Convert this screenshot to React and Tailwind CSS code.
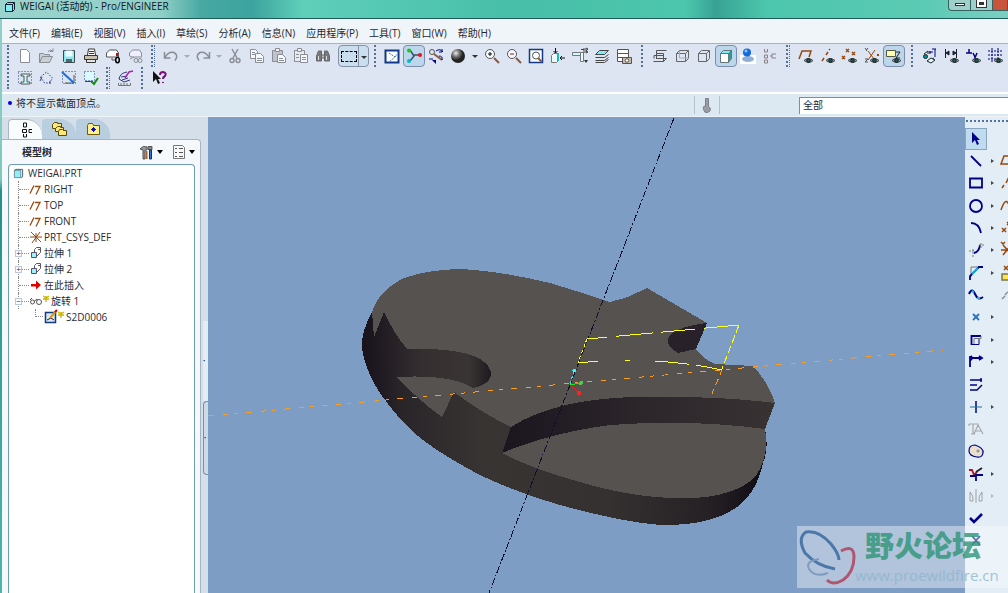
import React, { useState } from 'react';
import clsx from 'clsx';

const menus = ['文件(F)', '编辑(E)', '视图(V)', '插入(I)', '草绘(S)', '分析(A)', '信息(N)', '应用程序(P)', '工具(T)', '窗口(W)', '帮助(H)'];

const NAVY = '#00008b';
const BROWN = '#96480e';
const GRAY = '#8b8d95';

const Eye = () => (
  <g>
    <path d="M7 13.5q4-4 9 0q-4 4-9 0z" fill="#9aa4a8" stroke="#4a4a4a" />
    <circle cx="11.5" cy="13.5" r="1.8" fill="#0c6868" stroke="#111" />
  </g>
);

const icons = {
  new: <path d="M4.5 2.500h6l3 3v10h-9z" fill="#fbfdff" stroke={GRAY} />,
  open: <g stroke={GRAY}><path d="M1.500 15.500v-9h4l1 1h5v2M1.500 15.500l3-6h10l-3 6z" fill="#c9cdd4" /><path d="M10 4.500q3-3 5 0m0-3v3h-3" /></g>,
  save: <g><path d="M3.500 3.500h11v12h-10l-1-1z" fill="#8fe6ee" stroke="#3d4850" /><path d="M5.500 3.500h7v6h-7z" fill="#e9fdff" stroke="none" /><path d="M6 12h6v3H6z" fill="#566" stroke="none" /></g>,
  print: <g stroke="#3a3530"><path d="M5.500 8l1-6h6l1 6" fill="#fff" /><path d="M2.500 8.500h13v4h-13z" fill="#c9bfae" /><path d="M4.500 12.500h9v3h-9zM7 4.500h5M7 6.500h5" /></g>,
  mail: <g stroke="#555"><path d="M2.500 10V6l3-3h7l2 3v4z" fill="#fff" /><path d="M8 11v2l4 0" stroke="#555" /><path d="M13 6v3" stroke="#d00" strokeWidth="2" /><ellipse cx="13.500" cy="13" rx="1.800" ry="2.800" stroke="#000" strokeWidth="1.500" /></g>,
  link: <g stroke={GRAY}><path d="M3.500 9V6l3-3h7l2 3v4h-9z" fill="#eef" /><circle cx="10" cy="13.500" r="2" /><circle cx="14" cy="13.500" r="2" /><path d="M4 12l4-2" /></g>,
  undo: <path d="M2.500 5v6h6M3 10.500q3-6 9-5q5 3 1 8" stroke={GRAY} strokeWidth="1.500" />,
  redo: <path d="M15.500 5v6h-6M15 10.500q-3-6-9-5q-5 3-1 8" stroke={GRAY} strokeWidth="1.500" />,
  cut: <g stroke={GRAY} strokeWidth="1.400"><path d="M6 2l5 9M12 2L7 11" /><circle cx="6" cy="13.500" r="2" /><circle cx="12" cy="13.500" r="2" /></g>,
  copy: <g stroke={GRAY} fill="#f4f7fb"><path d="M2.500 2.500h5l2 2v7h-7z" /><path d="M7.500 6.500h5l3 3v6h-8z" /><path d="M4 5.500h3M4 7.500h3M9 11.500h5M9 13.500h5" /></g>,
  paste: <g stroke={GRAY}><path d="M2.500 3.500h10v11h-10z" fill="#bfc4cc" /><path d="M5.500 1.500h4v3h-4z" fill="#eee" /><path d="M7.500 7.500h5l3 3v5h-8z" fill="#f4f7fb" /><path d="M9 11.500h4M9 13.500h5" /></g>,
  pasteSpecial: <g stroke={GRAY}><path d="M2.500 3.500h10v11h-10z" fill="#e8ecf2" /><path d="M5.500 1.500h4v3h-4z" fill="#eee" /><path d="M4 7.500h3M4 10.500h3" /><path d="M8.500 7.500h7v8h-7z" fill="#f4f7fb" /><path d="M10 10.500h4M10 12.500h4" /></g>,
  find: <g stroke="#666" fill="#777a80"><path d="M2.500 14v-5l2-5h3v10zM15.500 14v-5l-2-5h-3v10z" /><path d="M7.500 8h3v3h-3z" fill="#bbb" /><path d="M4.500 9v4M12.500 9v4" stroke="#ddd" /></g>,
  sketchView: <g><path d="M2.500 3.500h13v12h-13z" fill="#fff" stroke="#12388a" strokeWidth="2" /><path d="M6 6l6 4-6 5M12 10l2-3" stroke="#3577b5" strokeDasharray="2 1" /></g>,
  skeleton: <g strokeWidth="1.500"><path d="M5 3l4 6-4 5M9 8h7" stroke="#33556b" /><circle cx="4" cy="3.500" r="2" fill="#1c1" stroke="none" /><circle cx="4" cy="14" r="2" fill="#0bc" stroke="none" /><circle cx="15" cy="8" r="2" fill="#e11" stroke="none" /></g>,
  spin: <g><circle cx="5" cy="5" r="2.500" stroke="#555" /><path d="M7 7l8 6" stroke="#8b5a3c" strokeWidth="2" /><path d="M9 4q4-3 7 1M15 2v3h-3M2 12h4M12 9q4 0 3 4" stroke={NAVY} /><path d="M5 13h4v4z" fill={NAVY} /></g>,
  sphere: <circle cx="9" cy="9" r="7" fill="url(#ball)" />,
  zoomIn: <g><circle cx="7" cy="7" r="4.500" fill="#f4fbff" stroke="#555" /><path d="M5 7h4M7 5v4" stroke="#111" /><path d="M11 11l5 5" stroke="#8b5a3c" strokeWidth="2" /></g>,
  zoomOut: <g><circle cx="7" cy="7" r="4.500" fill="#f4fbff" stroke="#555" /><path d="M5 7h4" stroke="#a11" /><path d="M11 11l5 5" stroke="#8b5a3c" strokeWidth="2" /></g>,
  refit: <g><path d="M2.500 2.500h13v13h-13z" fill="#fff" stroke="#12388a" strokeWidth="1.500" /><circle cx="9" cy="8.500" r="3.500" stroke="#555" /><path d="M11 11l4 4" stroke="#8b5a3c" strokeWidth="2" /></g>,
  orient: <g><path d="M2.500 8.500l2-2h5v7l-2 2h-5z" fill="#e9fbff" stroke="#777" /><path d="M9 7v7" stroke="#16b9b4" strokeWidth="2" /><path d="M6.500 1v5M4.500 4l2 2 2-2M16 11h-5M13 9l-2 2 2 2" stroke="#111" /></g>,
  saved: <g><path d="M1.500 5.500h8v3h-8z" fill="#c9fbff" stroke="#777" /><path d="M9.500 5.500v9h3v-9z" fill="#e4fdff" stroke="#777" /><path d="M10 2.500h3M13 1v5M15 1l2 1-2 2 2 1-2 1z" stroke="#444" /><path d="M13 13h4l-2 3z" fill="#333" stroke="none" /></g>,
  layers: <g stroke="#444"><path d="M2.500 13.500h9l4-3M2.500 15.500h9l4-3M2.500 10.500h9l4-3" /><path d="M2.500 7.500l4-4h9l-4 4z" fill="#7eeef5" /></g>,
  camera: <g stroke="#555"><path d="M2.500 2.500h11v12h-11z" fill="#fff" /><path d="M2.500 6.500h11M2.500 10.500h6" /><path d="M7.500 10.500h9v6h-9z" fill="#c9bfae" /><circle cx="12" cy="13.500" r="1.800" fill="#fff" /></g>,
  wireframe: <path d="M5.500 12V3.500h10M5.500 6.500h7v8M3 8.500h9M2.500 14.500h10l3-3M3 8.500v3M15.500 11.500h-10" stroke="#555" />,
  hidden: <g stroke="#666"><path d="M3.500 6.500h9v8h-9zM3.500 6.500l3-3h9v8l-3 3M12.500 6.500l3-3" /><path d="M6.500 4v7h9" stroke="#a9adb5" /></g>,
  noHidden: <path d="M3.500 6.500h8v8h-8zM3.500 6.500l3-3h8v8l-3 3M11.500 6.500l3-3" stroke="#666" />,
  shaded: <g stroke="#677"><path d="M3.500 6.500h8v9h-8z" fill="#fff" /><path d="M3.500 6.500l3-3h8l-3 3z" fill="#7eeef5" /><path d="M11.500 6.500l3-3v8l-3 4z" fill="#2f9b9b" /></g>,
  realism: <g stroke="none"><path d="M1 8h16v9H1z" fill="#fff" /><ellipse cx="9" cy="12" rx="6" ry="3" fill="#8fb0d4" /><circle cx="8" cy="5.500" r="4" fill="#1469e0" /><circle cx="7" cy="4" r="1.500" fill="#8fc6ff" /></g>,
  treeView: <path d="M3.500 2v3h3V2M3.500 8h3v3h-3zM3.500 13h3v3h-3zM9 9h2M15 7h-4v4h4" stroke="#8b8088" />,
  planes: <g><path d="M2 12l3-8h9l-2 6" stroke={BROWN} strokeWidth="1.500" /><Eye /></g>,
  axes: <g><path d="M3 14l2-3M7 8l2-3M10 3l1-1" stroke={BROWN} strokeWidth="1.500" /><Eye /></g>,
  points: <g><path d="M5 2l3 3M8 2l-3 3M11 5l3 3M14 5l-3 3M1 9l3 3M4 9l-3 3" stroke={BROWN} strokeWidth="1.500" /><Eye /></g>,
  csys: <g><path d="M5 4l6 8M12 3L5 13M14 7l2 2M16 7l-2 2" stroke={BROWN} /><path d="M2 1l1.500 2L5 1M3.500 3v1M2 12h3l-3 3h3" stroke="#555" /><Eye /></g>,
  tags: <g><path d="M1.500 3.500h9v6h-9z" fill="#fffdb0" stroke="#554" /><path d="M11 5h4l-4 6h4" stroke="#222" /><Eye /></g>,
  annot: <g><path d="M8 5h4M9 4v3M14 2v8M11 2h4" stroke={NAVY} /><path d="M3 7l4-3v3M7 14l6-3" stroke="#222" /><circle cx="4.500" cy="9.500" r="2" fill="#0a8c94" stroke="#222" /><path d="M6 14l4-3 4 2-4 3z" fill="#dff" stroke="#222" /></g>,
  dims: <g><path d="M2.500 2v9M13.500 2v9M3 6l3-2v4zM13 6l-3-2v4z" stroke="#1b1b30" fill="#1b1b30" /><Eye /></g>,
  constraints: <g><path d="M1 6h6M4 2v4M8 6l2 4M12 6l-3 7" stroke={NAVY} strokeWidth="1.500" /><Eye /></g>,
  gridToggle: <g><path d="M1 4h15M1 8h15M1 12h8M5 1v15M11 1v10" stroke={NAVY} strokeDasharray="2 1" /><Eye /></g>,
  section: <g><path d="M2.500 2.500h13v12h-13z" stroke="#2c3f8f" strokeDasharray="1 2" /><path d="M5 5h9v2h-3v6h3v2H5v-2h3V7H5z" fill="#c9fbff" stroke="#555" /></g>,
  polySel: <g stroke="#2c3f8f"><path d="M2.500 8l6-5 6 6-3 5h-5z" strokeDasharray="1.500 1.500" /><path d="M4 8l-2 4M12 12v3" /></g>,
  diagSel: <g><path d="M2.500 2.500h13v12h-13z" stroke="#2c3f8f" strokeDasharray="1 2" /><path d="M5 14h9V6" stroke="#555" /><path d="M2 3l12 11" stroke="#1b6fd8" strokeWidth="2" /></g>,
  checkSel: <g><path d="M2.500 2.500h10v9h-10z" fill="#d9fbff" stroke="#2c3f8f" strokeDasharray="1 2" /><path d="M3 12.500h8" stroke="#444" /><path d="M9 12l3 3 4-6" stroke="#178a17" strokeWidth="2" /></g>,
  sketch: <g><path d="M3 10q1-6 8-7M3 10l5 3 6-2M5 8l6-1M6 11l6-2" stroke="#333a80" /><path d="M9 9l4-6 4-1" stroke="#b01fb0" strokeWidth="1.500" /><path d="M2.500 14v2.500h12V14M5 14v2M8 14v2M11 14v2" stroke="#777" /></g>,
  help: <g><path d="M3 2v11l3-3 2 5 2-1-2-4h3z" fill="#111" stroke="none" /><path d="M10 6q0-3 3-3q4 1 2 4q-2 1-2 3M13 13v1" stroke="#7d0f7d" strokeWidth="2" /></g>,
};

const Icon = ({ name }) => (
  <svg viewBox="0 0 18 18" className="size-[18px] shrink-0" fill="none">{icons[name]}</svg>
);

const Tool = ({ name, on }) => (
  <button aria-label={name} className={clsx('h-[22px] w-[22px] shrink-0 flex items-center justify-center rounded-sm', on && 'border border-[#7d8ea8] bg-[#bcd6ec]')}>
    <Icon name={name} />
  </button>
);

const Drop = ({ dim, className }) => (
  <button aria-label="more" className={clsx('shrink-0 h-[22px] flex items-center justify-center', className)}>
    <span className={clsx('border-x-3 border-t-3 border-x-transparent', dim ? 'border-t-[#a5adba]' : 'border-t-[#333]')} />
  </button>
);

const Grip = ({ double, className }) => (
  <div className={clsx('flex shrink-0 items-stretch justify-center gap-px', className)}>
    <span className="border-l-2 border-dotted border-[#54719c]" />
    {double && <span className="border-l border-dotted border-[#54719c]" />}
  </div>
);

const Tools = ({ names, active = [] }) => names.map(n => <Tool key={n} name={n} on={active.includes(n)} />);

function Toolbar() {
  return (
    <div className="flex shrink-0 border-t border-[#a9b3bf] border-b-2 border-b-white bg-[#dce5f1] pt-px pb-[3px]">
      <Grip className="w-3" />
      <div className="flex min-w-0 flex-col overflow-hidden">
        <div className="flex">
          <Tools names={['new', 'open', 'save', 'print', 'mail', 'link']} />
          <Grip double className="w-[14px]" />
          <Tool name="undo" /><Drop dim className="w-[10px]" />
          <Tool name="redo" /><Drop dim className="w-[10px]" />
          <Tools names={['cut', 'copy', 'paste', 'pasteSpecial', 'find']} />
          <div className="ml-1 flex h-[22px] shrink-0 rounded-sm border border-[#8592a6] bg-[#c9dff0]">
            <button aria-label="select" className="flex w-5 items-center justify-center border-r border-[#8592a6]">
              <span className="h-[11px] w-4 border border-dashed border-black" />
            </button>
            <Drop className="w-[9px]" />
          </div>
          <Grip className="w-3" />
          <Tools names={['sketchView', 'skeleton', 'spin', 'sphere']} active={['skeleton']} />
          <Drop className="w-3" />
          <Tools names={['zoomIn', 'zoomOut', 'refit', 'orient', 'saved', 'layers', 'camera']} />
          <Grip className="w-[14px]" />
          <Tools names={['wireframe', 'hidden', 'noHidden', 'shaded', 'realism', 'treeView']} active={['shaded']} />
          <Grip double className="w-[14px]" />
          <Tools names={['planes', 'axes', 'points', 'csys', 'tags']} active={['tags']} />
          <Grip className="w-[14px]" />
          <Tools names={['annot', 'dims', 'constraints', 'gridToggle']} />
        </div>
        <div className="flex">
          <Tools names={['section', 'polySel', 'diagSel', 'checkSel']} />
          <Grip double className="w-3" />
          <Tool name="sketch" />
          <Grip className="w-3" />
          <Tool name="help" />
        </div>
      </div>
    </div>
  );
}

const treeIcons = {
  plane: <path d="M1 12.500l4-8M6 5.500h5l-4 8M4 5.500h1" stroke={BROWN} strokeWidth="1.300" />,
  csys: <path d="M2 3l10 10M11 3L3 14M1 8h12M7 4v9" stroke={BROWN} />,
  extrude: <g stroke="#556"><path d="M2.500 7.500h5v5h-5z" fill="#9fefff" /><path d="M5.500 7V4.500l2-2h4v5l-4 4" /><path d="M9 4.500h2" /></g>,
  insert: <path d="M2 7h5V3.500l5 4.500-5 4.500V9.500H2z" fill="#e00000" stroke="none" />,
  revolve: <g stroke="#555"><circle cx="3.500" cy="9" r="2" /><circle cx="10" cy="9" r="2.500" /><path d="M5 9q2-4 4-2M1 7l2-2" /></g>,
  sketch: <g><path d="M1.500 3.500h10v10h-10z" fill="#dce8f8" stroke="#123a7a" strokeWidth="1.500" /><path d="M3 11l4-2 3 2" stroke="#222" /><path d="M6 9l6-7" stroke="#d99a1c" strokeWidth="2" /><path d="M11 3l2-2" stroke="#c00" strokeWidth="2" /></g>,
};

const nodes = [
  { icon: 'plane', label: 'RIGHT' },
  { icon: 'plane', label: 'TOP' },
  { icon: 'plane', label: 'FRONT' },
  { icon: 'csys', label: 'PRT_CSYS_DEF' },
  { icon: 'extrude', label: '拉伸 1', mark: '+' },
  { icon: 'extrude', label: '拉伸 2', mark: '+' },
  { icon: 'insert', label: '在此插入' },
  { icon: 'revolve', label: '旋转 1', mark: '−', star: true },
];

const Star = () => <svg viewBox="0 0 7 7" className="size-[7px] self-start mt-0.5" fill="none"><path d="M0 1l3 2 3-2M0 4h6M3 1v6" stroke="#c9b400" strokeWidth="1.300" /></svg>;

const TreeRow = ({ icon, label, mark, star }) => (
  <li className="flex h-4 items-center">
    <span className="relative ml-[9px] flex h-full w-[11px] items-center border-l border-dotted border-[#888]">
      <span className="w-full border-t border-dotted border-[#888]" />
      {mark && <span className="absolute -left-1 flex h-[7px] w-[7px] items-center justify-center border border-[#b8c8d8] bg-white text-[8px] leading-none">{mark}</span>}
    </span>
    <svg viewBox="0 0 14 16" className="h-4 w-[14px] shrink-0" fill="none">{treeIcons[icon]}</svg>
    {star && <Star />}
    <span className="ml-px whitespace-nowrap">{label}</span>
  </li>
);

function ModelTree() {
  const [tab, setTab] = useState(0);
  const tabIcons = [
    <path key="a" d="M5.500 1v4h3V1zM4.500 7.500h4v3h-4zM14 7.500h-3v3h3M5.500 12v3h3v-3" stroke="#111" />,
    <g key="b" stroke="#5b4a10" fill="#ffe87a"><path d="M1.500 3.500l2-2h3v1h4v5h-9z" /><path d="M4.500 7.500l2-2h3v1h3v4h-8z" /><path d="M7.500 10.500l1-2h3l1 1h3v5h-8z" /></g>,
    <g key="c"><path d="M2.500 4.500l1-2h4l1 2h6v9h-12z" fill="#fff08a" stroke="#6b5a10" /><path d="M8.500 6v5M6 8.500h5M7 7l3 3M10 7l-3 3" stroke="#11119a" /></g>,
  ];
  return (
    <aside className="flex w-[206px] shrink-0 flex-col bg-[#d5dfea] pt-[2px]">
      <div role="tablist" className="flex h-5 items-end pl-1.5">
        {tabIcons.map((g, i) => (
          <button key={i} role="tab" aria-selected={tab === i} aria-label={`tab ${i + 1}`} onClick={() => setTab(i)}
            className={clsx('flex h-5 w-[34px] items-center justify-center rounded-tl-sm rounded-tr-2xl', tab === i ? 'border-t border-l border-[#a9b5c0] bg-[#f9fcfd]' : 'bg-[#b9cede]')}>
            <svg viewBox="0 0 16 16" className="size-4" fill="none">{g}</svg>
          </button>
        ))}
      </div>
      <div className="flex min-h-0 flex-1">
        <div className="flex min-w-0 flex-1 flex-col rounded-tr border-t border-r border-[#a9b3c4] bg-[#f5f9fb] pl-1.5 pr-[5px]">
          <div className="flex h-6 items-center">
            <h2 className="flex-1 pl-[14px] text-[10px] font-bold">模型树</h2>
            <button aria-label="settings" className="flex items-center gap-0.5 pr-2">
              <svg viewBox="0 0 16 16" className="size-4" fill="none"><path d="M1 5q3-4 7-2v3H6v9H4V6z" fill="#999" stroke="#555" /><path d="M9 2.500h4v3h-4z" fill="#888" stroke="#555" /><path d="M10.500 6h2v9h-2z" fill="#2979d0" stroke="#135" /><path d="M7.500 7v8" stroke="#b06030" strokeWidth="2" /></svg>
              <span className="border-x-[3px] border-t-4 border-x-transparent border-t-black" />
            </button>
            <button aria-label="show" className="flex items-center gap-0.5">
              <svg viewBox="0 0 16 16" className="size-4" fill="none"><path d="M2.500 1.500h9l2 2v11h-11z" fill="#f6f8fa" stroke="#777" /><path d="M4 4.500h2M4 8.500h2M4 12.500h2M8 4.500h4M8 8.500h4M8 12.500h4" stroke="#555" /></svg>
              <span className="border-x-[3px] border-t-4 border-x-transparent border-t-black" />
            </button>
          </div>
          <ul className="flex-1 overflow-hidden rounded-t-sm border border-b-0 border-[#6c9bb3] bg-white text-[10px] text-[#2b2b33]">
            <li className="flex h-4 items-center pl-1">
              <svg viewBox="0 0 12 12" className="mr-1 size-[11px]" fill="none"><path d="M1.500 2.500h7v8h-7z" fill="#8ff0f2" stroke="#689" /><path d="M1.500 2.500l2-1h7v8l-2 1" stroke="#456" /></svg>
              WEIGAI.PRT
            </li>
            {nodes.map((n, i) => <TreeRow key={i} {...n} />)}
            <li className="flex h-4 items-center">
              <span className="mb-2 ml-[26px] h-2 w-2 border-b border-l border-dotted border-[#888]" />
              <svg viewBox="0 0 14 16" className="ml-px h-4 w-[14px]" fill="none">{treeIcons.sketch}</svg>
              <Star />
              <span className="ml-px">S2D0006</span>
            </li>
          </ul>
        </div>
        <div className="flex w-[7px] flex-col pl-0.5 text-[6px] leading-none text-[#222]">
          <div className="flex-4" />
          <button aria-label="collapse" className="flex h-[80px] items-center bg-[#e3edf4]">•</button>
          <button aria-label="expand" className="flex h-[74px] items-center rounded-l-sm border border-r-0 border-[#7d8ea0] bg-[#cddbe9]">•</button>
          <div className="flex-[2.6]" />
        </div>
      </div>
    </aside>
  );
}

function Viewport() {
  return (
    <main className="min-w-0 flex-1 overflow-hidden bg-[#7d9dc5]">
      <svg viewBox="208 117 757 476" preserveAspectRatio="xMinYMin slice" shapeRendering="crispEdges" className="block h-full w-full" fill="none">
        <defs>
          <linearGradient id="side" x1="362" x2="768" y1="0" y2="0" gradientUnits="userSpaceOnUse">
            <stop offset="0" stopColor="#17121b" />
            <stop offset=".1" stopColor="#2a2529" />
            <stop offset=".3" stopColor="#383432" />
            <stop offset=".6" stopColor="#353131" />
            <stop offset=".85" stopColor="#262124" />
            <stop offset="1" stopColor="#0f0b14" />
          </linearGradient>
          <linearGradient id="wall" x1="502" x2="775" y1="0" y2="0" gradientUnits="userSpaceOnUse">
            <stop offset="0" stopColor="#1b151e" />
            <stop offset=".5" stopColor="#2c262b" />
            <stop offset="1" stopColor="#383233" />
          </linearGradient>
          <linearGradient id="slot" x1="375" x2="492" y1="0" y2="0" gradientUnits="userSpaceOnUse">
            <stop offset="0" stopColor="#1e1920" />
            <stop offset=".4" stopColor="#342e30" />
            <stop offset=".8" stopColor="#3a3534" />
            <stop offset="1" stopColor="#1d181e" />
          </linearGradient>
        </defs>
        {/* solid body */}
        <path d="M362 348Q361 332 372 312Q378 292 402 279Q425 270 460 269Q500 271 550 283Q583 293 610 302L628 297L647 288L707 323L696 349Q706 361 715 364L753 366Q768 382 775 403L765 429Q769 448 763 463Q757 492 737 507Q712 525 665 525Q630 524 560 505Q520 494 480 475Q440 454 418 436Q400 420 388 404Q366 376 362 348z" fill="url(#side)" />
        <path d="M384 312Q393 332 407 349Q486 347 491 373Q490 384 473 388Q450 374 397 377L380 350z" fill="url(#slot)" />
        <path d="M372 312Q378 292 402 279Q425 270 460 269Q500 271 550 283Q583 293 610 302L628 297L647 288L707 323L696 349Q706 361 715 364L753 366Q768 382 775 403Q720 396 650 397Q600 400 559 409Q530 417 511 427Q480 412 454 392L442 417Q418 400 397 377Q450 374 473 388Q492 384 491 373Q486 347 407 349Q393 332 384 312L374 337z" fill="#555250" />
        <path d="M511 427Q560 396 650 397Q720 396 775 403L765 429Q630 411 502 453z" fill="url(#wall)" />
        <path d="M502 453Q550 433 610 425Q690 419 765 429Q770 456 755 477Q735 496 693 498Q640 500 580 482Q530 468 502 453z" fill="#555250" />
        <path d="M707 323Q680 326 670 335Q663 344 678 353L696 349z" fill="#28212a" />

        <path d="M674 118L489 593" stroke="#0d0d30" strokeDasharray="7 2 2 2" />
        <path d="M208 416L943 350" stroke="#ff9c1a" strokeDasharray="6 9 5 6 4 8" />
        <g stroke="#ffff20">
          <path d="M587 339L739 325" strokeDasharray="20 9 37 8 34 9 60" />
          <path d="M739 325L722 369" strokeDasharray="8 3" />
          <path d="M587 339L578 362" strokeDasharray="3 3" />
          <path d="M578 362.500L598 361.500M625 360.500H630M655 361Q690 363 722 370" strokeDasharray="34 7 40" />
        </g>
        <path d="M722 370L711 396" stroke="#ff9c1a" strokeDasharray="6 4" />
        <path d="M570 384.500L581 383.500" stroke="#20e020" />
        <path d="M571 385L579 393" stroke="#f02020" />
        <path d="M570 384L574 371" stroke="#30e8f0" strokeDasharray="3 2" />
        <circle cx="574.500" cy="370.500" r="2" fill="#40f0f8" />
        <circle cx="581" cy="383" r="2" fill="#40d830" />
        <circle cx="579" cy="393" r="2.500" fill="#f02828" />
      </svg>
    </main>
  );
}

const sketchTools = [
  [<path d="M5 2v11l3-3 2 5 2-1-2-4h3z" fill={NAVY} stroke="none" />],
  [<path d="M4 4l10 10" />, 1, <path d="M2 12l3-8h9l-2 8z" stroke={BROWN} />],
  [<path d="M3 4.500h12v9H3z" />, 1, <path d="M3 14l2-3M7 9l3-6" stroke={BROWN} />],
  [<circle cx="9" cy="9" r="6" />, 1, <path d="M2 13q4-12 7-7t6-3" stroke={BROWN} />],
  [<path d="M4 4q8 0 10 10" />, 1, <path d="M3 9l4 4M7 9l-4 4M8 3l3 3M11 3l-3 3" stroke={BROWN} />],
  [<g><path d="M7 12q5-1 6-8" stroke={NAVY} /><path d="M2 10h6M6 8v8M12 4h5M14 2v5" stroke="#777" strokeDasharray="2 1" strokeWidth="1" /></g>, 1, <path d="M2 9h12M4 4l9 10M12 4L4 14M2 1l2 2 2-2" stroke={BROWN} />],
  [<g><path d="M4 13V3h10" stroke="#777" strokeWidth="1" /><path d="M3 16v-4L12 3h4" /><path d="M5 10l6-6" stroke="#13b4d8" /></g>, 1, <g><path d="M5 2l4 4M9 2L5 6" stroke={BROWN} /><path d="M3 10h9v6H3z" fill="#ffe34d" stroke="#775" /></g>],
  [<g><path d="M2 8q3-7 6 0t8 3" strokeWidth="2" /><path d="M5 5l2 1M10 12h3" stroke="#13b4d8" strokeWidth="2" /></g>, 0, <path d="M3 13l3-3M6 9q4-6 7-1" stroke={GRAY} />],
  [<path d="M6 6l6 6M12 6l-6 6" stroke="#2b6fc0" />, 1],
  [<g><path d="M4.500 14V5H14" /><path d="M4 13.500h8V7" strokeWidth="1" /><path d="M7 13V7.500h7V5" stroke="#777" strokeWidth="1" /></g>, 1],
  [<path d="M3 3v11M3 5h12M5 3L3 5l2 2M12 3l3 2-3 2" />, 1],
  [<path d="M3 5h12M14 3v4M3 10h7M3 15h7l5-5" strokeWidth="1.500" />],
  [<g><path d="M9 3v12" stroke="#1b2f9b" /><path d="M3 9h12" stroke="#2b6f9b" strokeWidth="1" /></g>, 1],
  [<path d="M2 4h9v3M2 4v2M6 4v10M4 14h4M7 14l4-9 5 9M9 11h5" stroke="#a5a9ae" strokeWidth="1.200" />],
  [<g><path d="M2 9q0-6 6-6q9 3 8 8q-1 5-6 4q-8-1-8-6z" fill="#e8e0cc" strokeWidth="1.200" /><circle cx="11" cy="9" r="1" stroke="#777" strokeWidth="1" /></g>],
  [<g><path d="M2 5h3l2 5 3-3" stroke="#b01020" /><path d="M16 10H9v6M3 11h6" /><path d="M9 7l6-4" stroke="#222" /></g>, 1],
  [<path d="M9 2v14M3 5v9h3q1-5-3-9zM15 5v9h-3q-1-5 3-9z" stroke="#a0a4aa" strokeWidth="1" />, 2],
  [<path d="M3 9l4 4 8-8" strokeWidth="2.500" />],
  [<path d="M5 4l8 9M13 4l-8 9" />],
];

function SketchBar() {
  return (
    <div className="w-[43px] shrink-0 overflow-hidden bg-[#e2edf5] pt-[3px]">
      <div className="mb-[6px] ml-px border-t-2 border-dotted border-[#54719c]" />
      {sketchTools.map(([g, more, extra], i) => (
        <div key={i} className={clsx('flex w-14', i % 3 === 2 && 'mb-px')}>
          <button aria-label={`sketch ${i + 1}`} className={clsx('flex h-[22px] w-[22px] items-center justify-center', i === 0 && 'border border-[#8ba5be] bg-[#bfdbf0]')}>
            <svg viewBox="0 0 18 18" className="size-[18px]" fill="none" stroke={NAVY} strokeWidth="1.800">{g}</svg>
          </button>
          <span className="flex w-[11px] items-center justify-center">
            {!!more && <span className={clsx('border-y-2 border-l-3 border-y-transparent', more === 2 ? 'border-l-[#b5bac0]' : 'border-l-[#444]')} />}
          </span>
          {extra && (
            <button aria-label={`datum ${i}`} className="flex items-center pl-px">
              <svg viewBox="0 0 18 18" className="size-[18px]" fill="none" strokeWidth="1.500">{extra}</svg>
            </button>
          )}
        </div>
      ))}
    </div>
  );
}

function Watermark() {
  return (
    <div className="pointer-events-none absolute right-0 bottom-[5px] flex w-[211px] overflow-hidden bg-white/40">
      <svg viewBox="0 0 60 62" className="h-[62px] w-[60px] shrink-0" fill="none">
        <path d="M38 43Q20 40 8 27Q0 12 9 6Q22 4 34 18Q42 28 42 34" stroke="#4b78a8" strokeWidth="3" />
        <path d="M22 33Q8 35 12 43Q18 52 31 47" stroke="#7f9bc0" strokeWidth="2" />
        <path d="M44 25Q57 18 57 31Q57 46 46 54Q36 60 30 54" stroke="#b0566f" strokeWidth="3" />
      </svg>
      <div className="-ml-1 flex flex-col whitespace-nowrap opacity-80">
        <span className="pl-3 text-[29px] leading-[40px] font-black text-[#2f9577]">野火论坛</span>
        <span className="pl-0.5 text-[15px] leading-[18px] text-[#8fb6cc]">www.proewildfire.cn</span>
      </div>
    </div>
  );
}

export default function App() {
  const [filter, setFilter] = useState('全部');
  return (
    <div className="relative flex h-screen flex-col overflow-hidden bg-[#dce5f1] font-['Open_Sans','Noto_Sans_CJK_SC',sans-serif] text-[10px] text-[#26262e]">
      <svg className="absolute size-0">
        <defs>
          <radialGradient id="ball" cx=".35" cy=".3"><stop offset="0" stopColor="#eee" /><stop offset=".5" stopColor="#777" /><stop offset="1" stopColor="#222" /></radialGradient>
        </defs>
      </svg>
      <header className="flex h-[19px] shrink-0 items-start justify-between border-b border-[#1d5a58] bg-[linear-gradient(90deg,#9bd3cd_0%,#8fd0c8_16%,#48a8a2_20%,#3da39e_25%,#5fcfba_30%,#48bfa9_50%,#4cc6ac_68%,#38a294_71%,#4cc6ac_76%,#5ccab4_92%,#7ccfc2_100%)] text-[#101820]">
        <h1 className="flex items-center gap-1 pl-1 leading-[13px]">
          <svg viewBox="0 0 12 12" className="size-3" fill="none"><path d="M1.500 3.500h7v7h-7z" fill="#7eeef5" stroke="#123" /><path d="M1.500 3.500l2-2h7v7l-2 2M8.500 3.500l2-2" stroke="#123" /></svg>
          <span>WEIGAI (活动的) - Pro/ENGINEER</span>
        </h1>
        <div className="flex h-[11px] overflow-hidden rounded-bl border border-t-0 border-[#35635f] bg-[#9fcfc9]">
          <button aria-label="minimize" className="flex w-[22px] justify-center border-r border-[#35635f] pt-[3px]"><span className="h-[3px] w-[10px] border border-[#333] bg-white" /></button>
          <button aria-label="maximize" className="flex w-[22px] justify-center border-r border-[#35635f]"><span className="h-[7px] w-[9px] border-2 border-white bg-[#333] outline outline-[#333]" /></button>
          <button aria-label="close" className="w-[14px] bg-[#c9543c]" />
        </div>
      </header>
      <div className="flex min-h-0 flex-1">
        <div className="w-[2px] shrink-0 bg-[linear-gradient(#8fd0c8,#7fc8bc_28%,#259088_30%,#4fb5a8)]" />
        <div className="flex min-w-0 flex-1 flex-col">
          <nav className="flex h-6 shrink-0 items-center gap-[11px] bg-[#f0f5f9] pt-1 pl-[7px]">
            {menus.map(m => <button key={m} className="whitespace-nowrap">{m}</button>)}
          </nav>
          <Toolbar />
          <div className="flex h-[23px] shrink-0 items-center border-b border-[#eef3f7] bg-[#dce8f2]">
            <p className="flex flex-1 items-center gap-1 pb-1 pl-1.5"><span className="size-1 rounded-full bg-[#0000e0]" />将不显示截面顶点。</p>
            <div className="flex w-[26px] justify-center border-x border-[#b5c2ce]">
              <svg viewBox="0 0 10 18" className="h-[18px] w-[10px]" fill="none"><path d="M3.500 2.500h3v8q2 1 2 3t-3 3t-4-3t2-3z" fill="#9a9da4" stroke="#7d8088" /></svg>
            </div>
            <div className="w-[79px]" />
            <select aria-label="filter" value={filter} onChange={e => setFilter(e.target.value)} className="h-[17px] w-[209px] appearance-none border-t border-l border-[#7d8ea0] bg-white pl-[3px] leading-[15px]">
              <option>全部</option>
            </select>
          </div>
          <div className="flex min-h-0 flex-1">
            <ModelTree />
            <Viewport />
            <SketchBar />
          </div>
        </div>
      </div>
      <Watermark />
    </div>
  );
}
